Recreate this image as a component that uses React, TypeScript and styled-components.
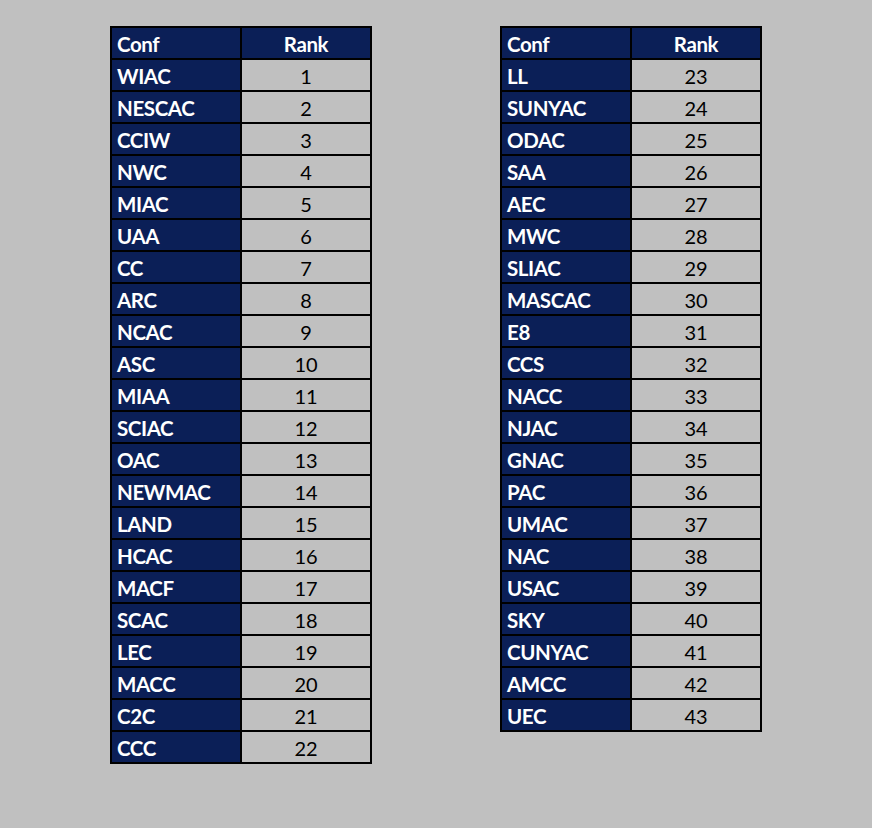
import styled, { createGlobalStyle } from "styled-components";

const left: [string, number][] = [
  ["WIAC", 1], ["NESCAC", 2], ["CCIW", 3], ["NWC", 4], ["MIAC", 5], ["UAA", 6],
  ["CC", 7], ["ARC", 8], ["NCAC", 9], ["ASC", 10], ["MIAA", 11], ["SCIAC", 12],
  ["OAC", 13], ["NEWMAC", 14], ["LAND", 15], ["HCAC", 16], ["MACF", 17],
  ["SCAC", 18], ["LEC", 19], ["MACC", 20], ["C2C", 21], ["CCC", 22],
];

const right: [string, number][] = [
  ["LL", 23], ["SUNYAC", 24], ["ODAC", 25], ["SAA", 26], ["AEC", 27], ["MWC", 28],
  ["SLIAC", 29], ["MASCAC", 30], ["E8", 31], ["CCS", 32], ["NACC", 33],
  ["NJAC", 34], ["GNAC", 35], ["PAC", 36], ["UMAC", 37], ["NAC", 38],
  ["USAC", 39], ["SKY", 40], ["CUNYAC", 41], ["AMCC", 42], ["UEC", 43],
];

const GlobalStyle = createGlobalStyle`
  html, body {
    margin: 0;
    background: #c0c0c0;
  }
  body {
    font-family: Lato, "Open Sans", sans-serif;
  }
`;

function RankTable({ rows }: { rows: [string, number][] }) {
  return (
    <Table>
      <ConfCell>Conf</ConfCell>
      <HeadRank>Rank</HeadRank>
      {rows.map(([conf, rank]) => (
        <Row key={conf}>
          <ConfCell>{conf}</ConfCell>
          <RankCell>{rank}</RankCell>
        </Row>
      ))}
    </Table>
  );
}

export default function App() {
  return (
    <>
      <GlobalStyle />
      <Page>
        <RankTable rows={left} />
        <RankTable rows={right} />
      </Page>
    </>
  );
}

const Page = styled.main`
  width: 872px;
  height: 828px;
  box-sizing: border-box;
  padding: 26px 0 0 110px;
  display: flex;
  align-items: flex-start;
  gap: 128px;
`;

const Table = styled.div`
  display: grid;
  grid-template-columns: 128px 128px;
  grid-auto-rows: 30px;
  gap: 2px;
  padding: 2px;
  background: #000;
`;

const Row = styled.div`
  display: contents;
`;

const ConfCell = styled.div`
  background: #0b1f57;
  color: #fff;
  font-weight: 700;
  font-size: 20.5px;
  letter-spacing: -0.4px;
  padding-left: 5px;
  padding-top: 1px;
  display: flex;
  align-items: center;
`;

const RankCell = styled.div`
  background: #c0c0c0;
  color: #000;
  font-size: 20px;
  padding-top: 1px;
  display: flex;
  align-items: center;
  justify-content: center;
`;

const HeadRank = styled(RankCell)`
  background: #0b1f57;
  color: #fff;
  font-weight: 700;
  font-size: 20.5px;
  letter-spacing: -0.4px;
`;
